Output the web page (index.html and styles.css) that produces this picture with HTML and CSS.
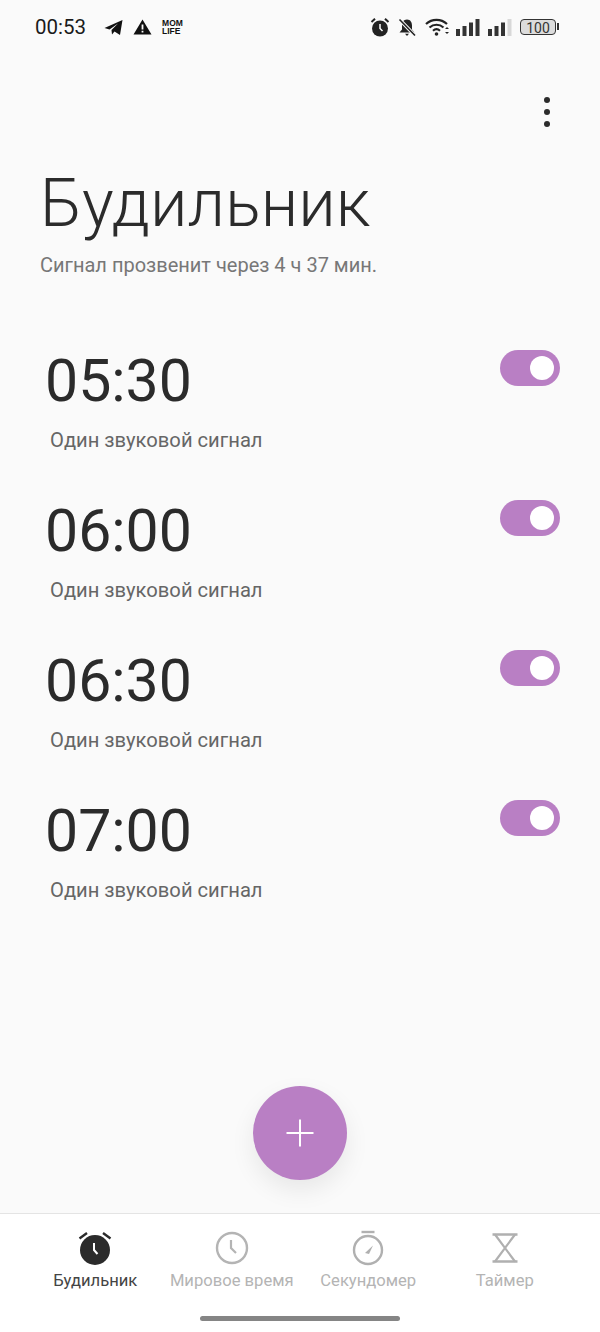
FILE: index.html
```html
<!DOCTYPE html>
<html>
  <head>
    <title>Будильник</title>
    <link rel="stylesheet" href="styles.css">
  </head>
  <body>
    <div class="status-bar">
      <div class="status-left">
        <span class="clock">00:53</span>
        <svg class="icon-tg" width="19" height="17" viewBox="0 0 19 17"><path d="M0.5 9 L18.5 1 L16 16 L10.5 12.5 L8 15.5 L7.5 11 L14 4.5 L5.5 10.5 Z" fill="#111"/></svg>
        <svg class="icon-warn" width="19" height="16" viewBox="0 0 19 16"><path fill-rule="evenodd" d="M9.5 0.5 L18.5 15.5 H0.5 Z M8.6 5.5 V10.5 H10.4 V5.5 Z M8.6 11.7 V13.4 H10.4 V11.7 Z" fill="#111"/></svg>
        <span class="momlife">MOM<br>LIFE</span>
      </div>
      <div class="status-right">
        <svg width="20" height="20" viewBox="0 0 20 20"><circle cx="10" cy="11.5" r="8" fill="#222"/><path d="M1.5 5 L5 1.8 M18.5 5 L15 1.8" stroke="#222" stroke-width="2"/><path d="M10 7 V11.5 L12.5 14" stroke="#fff" stroke-width="1.5" fill="none"/></svg>
        <svg class="icon-bell" width="18" height="19" viewBox="0 0 18 19"><path d="M9 1.5 C5.5 1.5 4 4.5 4 7.5 V11.5 L1.5 14.5 H16.5 L14 11.5 V7.5 C14 4.5 12.5 1.5 9 1.5 Z M7 15.8 H11 L9 18 Z" fill="#222"/><path d="M1.5 1.5 L17 17.5" stroke="#fafafa" stroke-width="3.4"/><path d="M1.5 1.5 L17 17.5" stroke="#222" stroke-width="1.6"/></svg>
        <svg class="icon-wifi" width="25" height="18" viewBox="0 0 25 18"><path d="M1 6 C7 0.5 16 0.5 22 6 M4.5 9.5 C8.5 5.8 14.5 5.8 18.5 9.5 M8 12.8 C10.2 10.8 12.8 10.8 15 12.8" stroke="#222" stroke-width="2.2" fill="none"/><circle cx="11.5" cy="16" r="1.8" fill="#222"/><path d="M20 11 L22 9 L24 11 Z M20 14 L22 16 L24 14 Z" fill="#222"/></svg>
        <svg class="icon-signal" width="24" height="17" viewBox="0 0 24 17"><rect x="0" y="10" width="4" height="7" fill="#333"/><rect x="6.5" y="7" width="4" height="10" fill="#333"/><rect x="13" y="3.5" width="4" height="13.5" fill="#333"/><rect x="19.5" y="0" width="4" height="17" fill="#333"/></svg>
        <svg class="icon-signal" width="24" height="17" viewBox="0 0 24 17"><rect x="0" y="10" width="4" height="7" fill="#333"/><rect x="6.5" y="7" width="4" height="10" fill="#333"/><rect x="13" y="3.5" width="4" height="13.5" fill="#333"/><rect x="19.5" y="0" width="4" height="17" fill="#d8d8d8"/></svg>
        <div class="battery"><span class="battery-level">100</span></div>
      </div>
    </div>

    <div class="main">
      <div class="menu-row">
        <div class="menu-dots"><i></i><i></i><i></i></div>
      </div>
      <h1 class="title">Будильник</h1>
      <p class="subtitle">Сигнал прозвенит через 4 ч 37 мин.</p>

      <div class="alarm-list">
        <div class="alarm">
          <div>
            <div class="alarm-time">05:30</div>
            <div class="alarm-label">Один звуковой сигнал</div>
          </div>
          <div class="switch"><i></i></div>
        </div>
        <div class="alarm">
          <div>
            <div class="alarm-time">06:00</div>
            <div class="alarm-label">Один звуковой сигнал</div>
          </div>
          <div class="switch"><i></i></div>
        </div>
        <div class="alarm">
          <div>
            <div class="alarm-time">06:30</div>
            <div class="alarm-label">Один звуковой сигнал</div>
          </div>
          <div class="switch"><i></i></div>
        </div>
        <div class="alarm">
          <div>
            <div class="alarm-time">07:00</div>
            <div class="alarm-label">Один звуковой сигнал</div>
          </div>
          <div class="switch"><i></i></div>
        </div>
      </div>

      <div class="fab">
        <svg width="30" height="30" viewBox="0 0 30 30"><path d="M15 1.5 V28.5 M1.5 15 H28.5" stroke="#fff" stroke-width="2"/></svg>
      </div>
    </div>

    <div class="tab-bar">
      <div class="tab active">
        <svg width="36" height="36" viewBox="0 0 36 36"><circle cx="18" cy="20" r="15" fill="#2b2b2b"/><path d="M2.5 8.5 L10 3 M33.5 8.5 L26 3" stroke="#2b2b2b" stroke-width="2.4"/><path d="M17 13 V20 L20.5 24" stroke="#fff" stroke-width="2" fill="none"/></svg>
        <span>Будильник</span>
      </div>
      <div class="tab">
        <svg width="36" height="36" viewBox="0 0 36 36"><circle cx="18" cy="18" r="15" stroke="#b4b4b4" stroke-width="2.4" fill="none"/><path d="M17 10 V18 L22 23" stroke="#b4b4b4" stroke-width="2.2" fill="none"/></svg>
        <span>Мировое время</span>
      </div>
      <div class="tab">
        <svg width="36" height="36" viewBox="0 0 36 36"><path d="M11.5 2 H24.5" stroke="#b0b0b0" stroke-width="2.4"/><circle cx="18" cy="20" r="14" stroke="#b0b0b0" stroke-width="2.4" fill="none"/><path d="M15 23 L23 15.5 L19 24 Z" fill="#b0b0b0"/></svg>
        <span>Секундомер</span>
      </div>
      <div class="tab">
        <svg width="36" height="36" viewBox="0 0 36 36"><path d="M5.5 4.5 H30.5 M5.5 31.5 H30.5" stroke="#b0b0b0" stroke-width="2.6"/><path d="M8 4.5 L28 31.5 M28 4.5 L8 31.5" stroke="#b0b0b0" stroke-width="2.2" fill="none"/></svg>
        <span>Таймер</span>
      </div>
      <div class="home-bar"></div>
    </div>
  </body>
</html>
```

FILE: styles.css
```css
html,
body {
  margin: 0;
  padding: 0;
}
body {
  width: 600px;
  height: 1332px;
  overflow: hidden;
  display: flex;
  flex-direction: column;
  background-color: #fafafa;
  font-family: Roboto, "Noto Sans", sans-serif;
  color: #2b2b2b;
}
.status-bar {
  height: 54px;
  flex-shrink: 0;
  display: flex;
  justify-content: space-between;
  align-items: center;
  padding: 0 44px 0 35px;
}
.status-left,
.status-right {
  display: flex;
  align-items: center;
}
.clock {
  font-size: 20.5px;
  color: #1a1a1a;
  margin-right: 18px;
}
.icon-warn {
  margin-left: 10px;
}
.momlife {
  margin-left: 10px;
  font-family: "Liberation Sans", sans-serif;
  font-size: 8.5px;
  line-height: 8px;
  font-weight: 700;
  color: #111;
}
.icon-bell {
  margin-left: 8px;
}
.icon-wifi {
  margin-left: 9px;
}
.icon-signal {
  margin-left: 6px;
}
.icon-signal + .icon-signal {
  margin-left: 8px;
}
.battery {
  margin-left: 8px;
  width: 36px;
  height: 16px;
  box-sizing: border-box;
  border: 1.5px solid #333;
  border-radius: 4px;
  background-color: #dcdcdc;
  display: flex;
  align-items: center;
  justify-content: center;
  position: relative;
}
.battery::after {
  content: "";
  position: absolute;
  right: -4px;
  top: 3px;
  width: 2px;
  height: 7px;
  background-color: #333;
}
.battery-level {
  font-size: 14px;
  line-height: 14px;
  padding-top: 1px;
  color: #333;
}
.main {
  flex: 1;
  display: flex;
  flex-direction: column;
  min-height: 0;
}
.menu-row {
  display: flex;
  justify-content: flex-end;
  padding: 43px 50px 0 0;
}
.menu-dots {
  display: flex;
  flex-direction: column;
  gap: 6px;
}
.menu-dots i {
  display: block;
  width: 6px;
  height: 6px;
  border-radius: 50%;
  background-color: #2b2b2b;
}
.title {
  margin: 36px 0 0 40px;
  font-size: 66.7px;
  line-height: 80px;
  font-weight: 300;
  color: #2b2b2b;
}
.subtitle {
  margin: 10px 0 0 40px;
  font-size: 20px;
  line-height: 24px;
  color: #777;
}
.alarm-list {
  margin-top: 73px;
  display: flex;
  flex-direction: column;
}
.alarm {
  height: 150px;
  box-sizing: border-box;
  padding: 0 40px 0 45px;
  display: flex;
  justify-content: space-between;
  align-items: flex-start;
}
.alarm-time {
  font-size: 59px;
  line-height: 62px;
  color: #2b2b2b;
}
.alarm-label {
  margin: 16px 0 0 5px;
  font-size: 20.2px;
  line-height: 24px;
  color: #666;
}
.switch {
  width: 60px;
  height: 36px;
  padding-right: 6px;
  box-sizing: border-box;
  border-radius: 18px;
  background-color: #b97fc4;
  display: flex;
  align-items: center;
  justify-content: flex-end;
}
.switch i {
  display: block;
  width: 24px;
  height: 24px;
  border-radius: 50%;
  background-color: #fff;
}
.fab {
  margin: auto auto 33px;
  width: 94px;
  height: 94px;
  flex-shrink: 0;
  border-radius: 50%;
  background-color: #b97fc4;
  box-shadow: 0 10px 24px rgba(0, 0, 0, 0.08);
  display: flex;
  align-items: center;
  justify-content: center;
}
.tab-bar {
  height: 119px;
  flex-shrink: 0;
  box-sizing: border-box;
  padding: 16px 27px 0;
  background-color: #fff;
  border-top: 1px solid #e4e4e4;
  display: flex;
  position: relative;
}
.tab {
  flex: 1;
  display: flex;
  flex-direction: column;
  align-items: center;
  font-size: 16.6px;
  line-height: 20px;
  color: #b4b4b4;
}
.tab span {
  margin-top: 5px;
  white-space: nowrap;
}
.tab.active {
  color: #444;
}
.home-bar {
  position: absolute;
  left: 200px;
  bottom: 11px;
  width: 200px;
  height: 5px;
  border-radius: 3px;
  background-color: #858585;
}
```
